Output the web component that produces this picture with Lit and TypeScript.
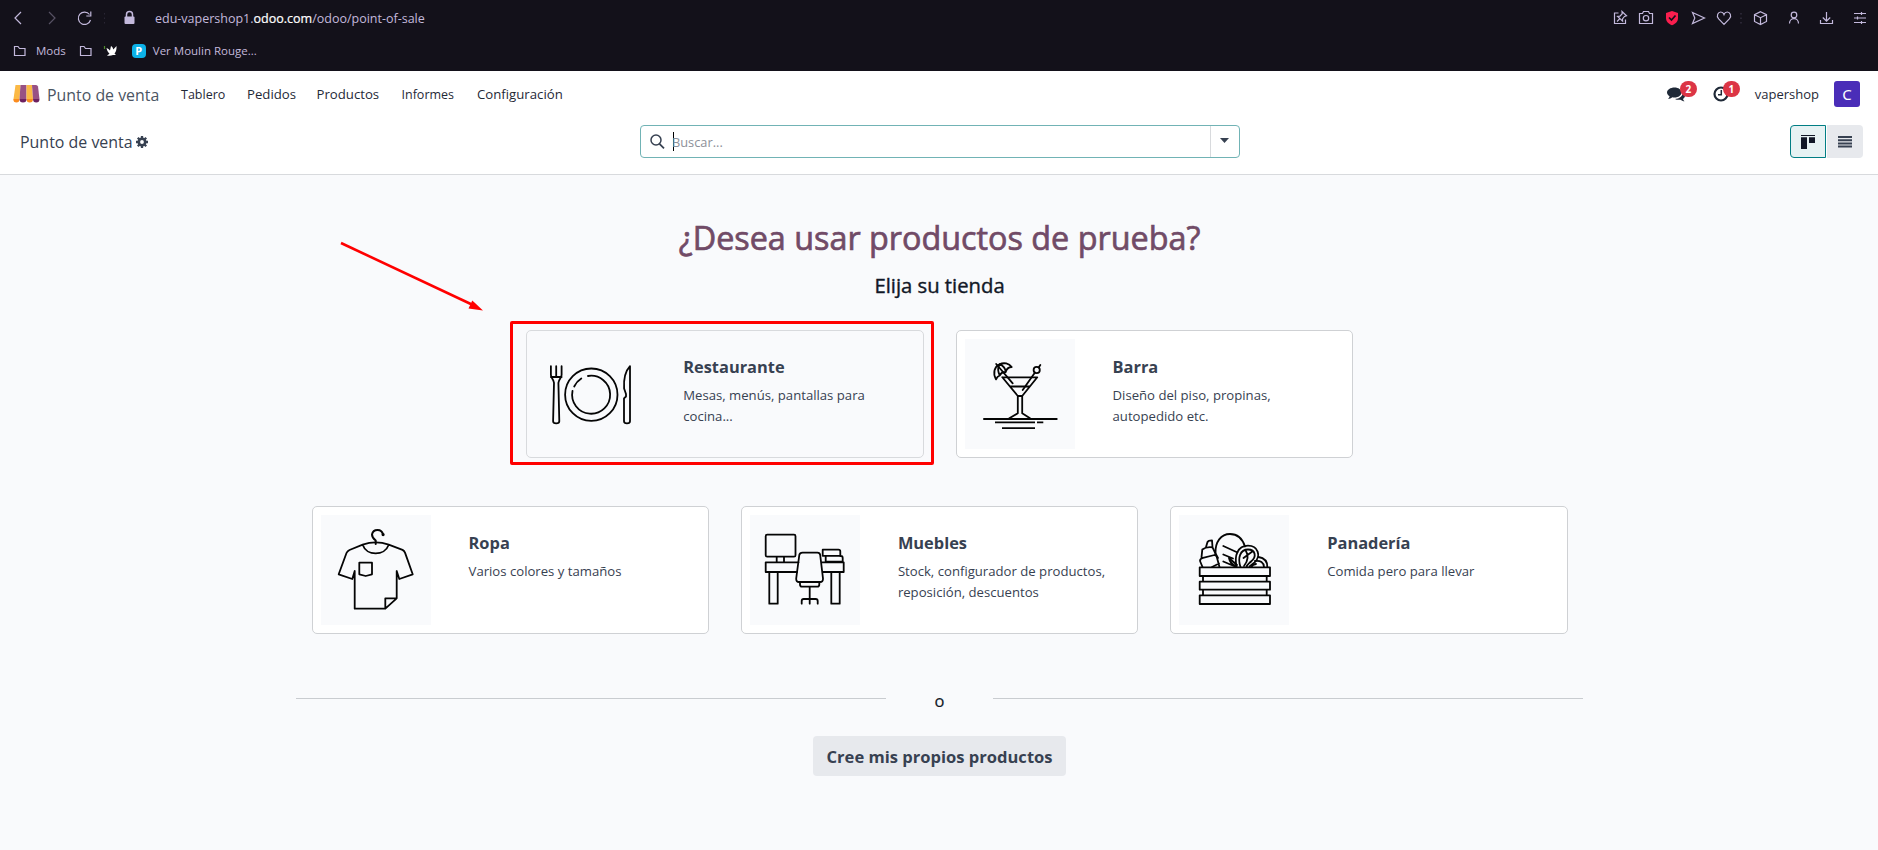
import { LitElement, html, css, svg } from "lit";
import { customElement } from "lit/decorators.js";

const plate = svg`
  <path d="M15.900 27.200v8.600c0 3.600 2.400 3.500 3.100 8l-.9 38.400c0 2.800 6.200 2.800 6.200 0l-.9-38.400c.7-4.500 3.200-4.400 3.200-8V27.200M21.200 27.200V38M15.900 38H26.600"/>
  <circle cx="56.300" cy="55.700" r="26.200"/>
  <path d="M53 37A19 19 0 1 1 37.500 52M39.200 47.500A19 19 0 0 1 46.300 39.500"/>
  <path d="M95 27.200V82.200c0 2.800-6 2.800-6 0V59.300l2-1.800V55l-1.900-5.500C88.600 41 90.500 32 95 27.200z"/>`;

const cocktail = svg`
  <path d="M37.300 38.300H72.300L57.200 57V74.300L65 79.200M37.300 38.300L52.800 57V74.300L44.300 79.200M45.700 47.500H64.300M52.800 57H57.200"/>
  <path d="M19 80H91.700" stroke-width="2"/>
  <path d="M30 83.400H70M72 83.400H78.300M37 89.100H70" stroke-width="1.900" stroke-linecap="butt"/>
  <circle cx="71.700" cy="31" r="3.100"/>
  <path d="M75.300 26L73.700 28.500M70 33.500L57.700 51M31.200 25L47.700 44.300"/>
  <path d="M31 40.400C27.500 34 29.500 27.500 34.500 25.300C39 23.200 44 24.300 46.700 28C43.500 28.200 41.500 30 40.700 33C38 33 35.500 34.500 34.800 36.500C33 37 31.800 38.300 31 40.400zM34.500 25.300C32.500 29 33 33 34.800 36.500M34.500 25.300C38 26.500 40.500 29.500 40.700 33"/>`;

const shirt = svg`
  <path d="M41.700 29.700Q54.700 25.200 67.700 29.700L81.500 34.900Q83.200 35.800 84 37.600L91.700 59.300L78.300 64L75.700 56V83.300L64.300 93.700H33.700V56L31.300 64L17.700 59.300L25.500 38Q26.300 36.200 28.500 35zM41.700 29.700C45.500 41.300 63.700 41.300 67.700 29.700M64.300 93.700V83.300H75.700M38.300 47.700H51V59.300L44.700 61L38.300 59.300z"/>
  <path d="M54.700 29V25.500Q51 22.700 51 19.500A5.600 5.600 0 0 1 62 19.600" stroke-width="2"/>
  <circle cx="62.100" cy="19.600" r=".7"/>`;

const desk = svg`
  <rect x="15.700" y="19.700" width="29.800" height="22" rx="1.500"/>
  <path d="M26.700 42V47.300M34 42V47.300M48.500 47.300H15.700V57H47M72 47.300H93.700V57H73M19.300 57V88.700H27.700V57M81.300 57V88.700H89.700V57"/>
  <path d="M52.500 37.700H67.500Q69.800 37.700 70.200 40L73 63.500Q73.200 67 70 67H49Q46 67 46.200 63.500L49.300 40Q49.800 37.700 52.500 37.700zM50 67V69.500Q50 71.700 52 71.700H67.300Q69.300 71.700 69.300 69.500V67M59.700 71.700V88.700M51.700 88.700V86Q51.700 84 53.700 84H65.700Q67.700 84 67.700 86V88.700"/>
  <path d="M72.700 34.700H88.500Q90.300 34.700 90.300 36.500V40.800H72.700zM90 41H91Q92.700 41 92.700 43V46.700H75.700V41"/>`;

const crate = svg`
  <path d="M20.700 52.300H91V61H20.700zM20.700 66.700H91V74.700H20.700zM20.700 80.300H91V89H20.700zM24 61V66.700M87.700 61V66.700M24 74.700V80.300M87.700 74.700V80.300"/>
  <path d="M26.800 32.700L28.500 27Q29.300 25.300 33 25.300L33.500 32.300M22.500 42.300L23.300 34.500Q27 31.500 33.500 32.300L36.500 38.500M21 46Q21 43.500 24 42.800L35.500 40Q37 40 37.800 42L40.500 52M21 46L23.500 52M33 52L40 48.500"/>
  <path d="M36.500 38.300C36 27 42 19 51 19C58 19 63.500 24 66 31.500M36.500 38.300L39 43M44.300 31L58.500 37.500M44.300 39.500L54 43.500M44.300 46.500L56 51.500M50 43L58 50M50 43Q51 49 57 51"/>
  <path d="M57.700 52C55 41 58.500 30.700 69 30.700C79 30.700 82.500 41 75.500 47.500L70.500 51.500M61.500 52C58.500 43 61 34.500 69 34.500C76.500 34.500 78 42 72 46.500C70 48.500 68 49.500 67.500 52M66.500 35C69.500 40 69 46 65 51M74 36L64.500 43"/>
  <path d="M79.500 42Q88.500 43.500 88.300 52M76 46Q84.500 45 85 52M72.500 52Q73.500 49.500 77 49"/>`;

@customElement("shop-card")
class ShopCard extends LitElement {
  static properties = { name: {}, text: {}, art: { attribute: false }, active: { type: Boolean, reflect: true } };
  declare name: string;
  declare text: string;
  declare art: unknown;
  declare active: boolean;
  static styles = css`
    :host { display: flex; box-sizing: border-box; width: 397.330px; height: 128px; padding: 8px; background: #fff;
      border: 1px solid #cfd1d4; border-radius: 5px; }
    :host([active]) { background: #f9fafc; border-color: #d8dadd; }
    .art { flex: none; width: 110px; height: 110px; background: #f9fafc; }
    svg { display: block; fill: none; stroke: #050505; stroke-width: 1.800; stroke-linejoin: round; stroke-linecap: round; }
    .body { padding: 16px 0 0 38px; width: 216px; }
    h3 { margin: 0; font-size: 16.400px; line-height: 23px; font-weight: 700; color: #374151; }
    p { margin: 7px 0 0; font-size: 13.150px; line-height: 21px; color: #374151; white-space: pre-line; }
  `;
  render() {
    return html`<div class="art"><svg width="110" height="110" viewBox="0 0 110 110">${this.art}</svg></div>
      <div class="body"><h3>${this.name}</h3><p>${this.text}</p></div>`;
  }
}

@customElement("app-root")
class AppRoot extends LitElement {
  static styles = css`
    :host { display: block; position: relative; width: 1878px; height: 850px; overflow: hidden; background: #f9fafc;
      font-family: "Open Sans", "Noto Sans", sans-serif; color: #374151; }
    svg { display: block; flex: none; }
    .row { display: flex; align-items: center; }
    .browser { height: 71px; background: #13111a; color: #c3b9dc; }
    .browser svg { fill: none; stroke: #c3b9dc; stroke-width: 1.200; }
    .browser .dim { stroke: #575264; }
    .browser .leaf { stroke: #4f8a2b; }
    .tools { height: 36px; padding-left: 13px; }
    .url { font-size: 12.500px; margin-left: 18px; padding-top: 1px; line-height: 18px; white-space: nowrap; }
    .url b { font-weight: 400; color: #fff; -webkit-text-stroke: .2px #fff; }
    .actions { margin-left: auto; padding-right: 11px; }
    .marks { height: 30px; padding-left: 13px; font-size: 11.500px; line-height: 16px; }
    .marks span { margin-top: -1px; }
    .marks .mods { margin: -1px 13px 0 10px; }
    .marks .p { width: 14px; height: 14px; border-radius: 4px; background: #0cb2e8; color: #fff; font-weight: 700; font-size: 11px; line-height: 14px; text-align: center; margin: 0 7px 0 14px; }
    .header { background: #fff; height: 46px; padding: 0 18px 0 13px; }
    .brand { font-size: 15.900px; margin: 1px 0 0 7px; width: 134px; color: #4b5563; }
    .menu { display: grid; grid-template-columns: 66px 69.500px 85px 75.500px auto; align-items: baseline; margin-top: -1px; font-size: 13.200px; color: #1f2937; }
    .menu .tight { font-size: 12.500px; }
    .tray { margin-left: auto; color: #1f2937; font-size: 13px; }
    .note { position: relative; }
    .messages { width: 46px; }
    .messages .badge { left: 13px; }
    .activities { width: 42px; }
    .activities .badge { left: 10px; }
    .badge { position: absolute; top: -5px; height: 16px; width: 17px; border-radius: 8px; background: #dc3545; color: #fff; font-size: 10px; line-height: 16px; font-weight: 700; text-align: center; }
    .avatar { width: 26px; height: 26px; margin-left: 15px; border-radius: 3px; background: #4a2db8; color: #fff; text-align: center; font: 15px/26px "Noto Sans", sans-serif; }
    .panel { background: #fff; height: 57px; padding: 0 15px 0 20px; display: grid; grid-template-columns: 620px 600px 1fr; align-items: start; border-bottom: 1px solid #d8dadd; }
    .crumb { font-size: 15.950px; height: 33px; margin-top: 8px; gap: 3px; color: #374151; }
    .search { box-sizing: border-box; height: 33px; margin-top: 8px; border: 1px solid #71b3b5; border-radius: 4px; }
    .search .glass { margin-left: 9px; }
    .caret { width: 1px; height: 19px; background: #000; margin-left: 8px; }
    .hint { font-size: 12.800px; color: #8d9099; flex: 1; margin-left: -2px; }
    .drop { border-left: 1px solid #d8dadd; width: 28px; height: 31px; display: grid; place-items: center; }
    .drop svg { margin: 0 2px 2px 0; }
    .views { justify-self: end; margin-top: 8px; display: flex; gap: 1px; }
    .view { box-sizing: border-box; width: 36px; height: 33px; display: grid; place-items: center; background: #e7e9ed; border-radius: 0 4px 4px 0; }
    .view.on { background: #e6f2f3; border: 1px solid #017e84; border-radius: 4px 0 0 4px; }
    .content { padding-left: 1.100px; }
    h1 { margin: 0; padding-top: 39px; text-align: center; font-size: 32.350px; line-height: 46px; font-weight: 500; color: #714b67; -webkit-text-stroke: .7px #714b67; }
    h2 { margin: 10px 0 0; text-align: center; font-size: 20.250px; line-height: 30px; font-weight: 500; color: #111827; -webkit-text-stroke: .4px #111827; }
    .shops { display: flex; justify-content: center; gap: 32px; margin-top: 30px; }
    .shops + .shops { margin-top: 48px; }
    .or { display: flex; justify-content: space-between; width: 1287.500px; margin: 55px auto 0; font-size: 16.500px; line-height: 24px; height: 28px; font-weight: 500; color: #111827; }
    .or span { -webkit-text-stroke: .2px #111827; }
    .or i { width: 590px; height: 1px; margin-top: 9px; background: #c9ccd0; }
    .own { display: block; width: 253px; height: 40px; margin: 19px auto 0; padding: 1px 0 0; border: 0; border-radius: 4px; background: #e7e9ed; color: #374151; font: 700 16.560px/39px "Open Sans", sans-serif; }
    .frame { position: absolute; left: 510px; top: 321px; box-sizing: border-box; width: 424px; height: 144px; border: 3px solid #f00; border-radius: 2px; }
    .arrow { position: absolute; left: 336px; top: 238px; }
  `;
  render() {
    const folder = html`<svg width="13" height="12"><path d="M1.500 1.500h3.500l1.500 2h5.500v7h-10.500z"/></svg>`;
    return html`
      <div class="browser">
        <div class="row tools">
          <svg width="92" height="36">
            <path d="M8 12L2 18l6 6"/><path class="dim" d="M36 12l6 6-6 6"/>
            <path d="M76.500 14.500A6.200 6.200 0 1 0 77.500 20M77.800 11.500v4.500h-4.500"/>
            <path d="M92 13v11" stroke="#3a3647" stroke-dasharray="1.500 3"/>
          </svg>
          <svg width="32" height="36"><path d="M21.500 17v-2.500a3 3 0 0 1 6 0v2.500" stroke-width="1.500"/><rect x="19.500" y="16.500" width="10" height="7.500" rx="1" fill="#c3b9dc" stroke="none"/></svg>
          <div class="url">edu-vapershop1.<b>odoo.com</b>/odoo/point-of-sale</div>
          <svg class="actions" width="255" height="36">
            <path d="M6.500 13H2.500v10.500h11v-4"/><path d="M10 11.500l4.500 4.300-2 .6-2 2.500.1 2.200-5-4.600 2.400-.3 2.200-2.500zM7.500 19l-2.500 2.500"/>
            <path d="M27.500 13.500h3l1-2h5l1 2h3v10h-13z"/><circle cx="34" cy="18.200" r="2.700"/>
            <path d="M60 11l6 2v5c0 3.500-2.500 6-6 7.300-3.500-1.300-6-3.800-6-7.300v-5z" fill="#fa1e4e" stroke="none"/><path d="M57 17.500l2.500 2.500 4-4.500" stroke="#13111a" stroke-width="1.700"/>
            <path d="M80.500 12.500L92.500 18l-12 5.500 2.300-5.500z"/>
            <path d="M112 24.300l-5.300-5.500c-3-3.300-.4-6.800 2-6.800 1.700 0 2.800 1.200 3.300 2.500.5-1.300 1.600-2.500 3.300-2.500 2.400 0 5 3.500 2 6.800z"/>
            <path d="M129 13v11" stroke="#3a3647" stroke-dasharray="1.500 3"/>
            <path d="M148.500 11.700l6 3v6.800l-6 3-6-3v-6.800zM142.500 14.700l6 3 6-3M148.500 17.700v6.800"/>
            <circle cx="182" cy="15" r="2.800"/><path d="M177.500 23.500c0-6.500 9-6.500 9 0"/>
            <path d="M208.500 20v3.500h12V20M214.500 12v9M210.800 17.500l3.700 3.700 3.700-3.700"/>
            <path d="M242 13.500h12M242 18h12M242 22.500h12M249.500 12v3M245.500 16.500v3M249.500 21v3"/>
          </svg>
        </div>
        <div class="row marks">
          ${folder}<span class="mods">Mods</span>${folder}
          <svg width="26" height="14"><path d="M14.500 4c1.500.5 2.500 1.500 3.500 2.500l1-4.500c1.500 1 2 2 2.300 3.500L24.500 2c.2 3-.3 5.500-2 7.500l1.500 1.500h-3c-2 .8-4 .8-6 .5l2.500-1.800C15.500 8 15 6 14.500 4z" fill="#fff" stroke="none"/><path class="leaf" d="M12.500 2v3"/></svg>
          <span class="p">P</span><span>Ver Moulin Rouge...</span>
        </div>
      </div>
      <div class="row header">
        <svg width="27" height="20" viewBox="0 0 27 20">
          <path d="M2.500 1h5L6.500 15H.5z" fill="#fbb945"/><path d="M7.500 1h6v14h-7z" fill="#985184"/><path d="M13.500 1h5.500l1 14h-6.500z" fill="#fbb945"/><path d="M19 1h4q1.500 0 2 1.500L26.500 15H20z" fill="#985184"/>
          <path d="M.3 15h6.200a3.100 3.500 0 0 1-6.200 0zM13.500 15H20a3.200 3.500 0 0 1-6.500 0z" fill="#fb8c1e"/><path d="M6.500 15h7a3.500 3.500 0 0 1-7 0zM20 15h6.500a3.200 3.500 0 0 1-6.500 0z" fill="#6d2160"/>
        </svg>
        <div class="brand">Punto de venta</div>
        <div class="menu"><span class="tight">Tablero</span><span>Pedidos</span><span>Productos</span><span class="tight">Informes</span><span>Configuración</span></div>
        <div class="row tray">
          <div class="note messages"><svg width="19" height="16" fill="#1f2937"><path d="M7.500 1.500c4 0 7 2.200 7 5s-3 5-7 5c-.8 0-1.500-.1-2.200-.3C4 12.200 2.500 12.800 1 12.900c.8-.8 1.400-1.600 1.600-2.700C1 9.300 0 8 0 6.500c0-2.800 3.500-5 7.500-5z"/><path d="M15.800 6.500c1.400.8 2.200 2 2.200 3.200 0 1.300-.8 2.500-2 3.200.2 1 .7 1.600 1.500 2.400-1.500-.1-3-.7-4-1.600-2 .4-4 .1-5.500-.8 4.500-.1 7.800-2.700 7.800-6.400z"/></svg><span class="badge">2</span></div>
          <div class="note activities"><svg width="17" height="16" fill="none" stroke="#1f2937"><circle cx="8" cy="8" r="6.500" stroke-width="2.200"/><path d="M8.300 4v4.700H5" stroke-width="1.500"/></svg><span class="badge">1</span></div>
          <span>vapershop</span><div class="avatar">C</div>
        </div>
      </div>
      <div class="panel">
        <div class="row crumb">Punto de venta
          <svg width="12" height="12" viewBox="0 0 12 12"><circle cx="6" cy="6" r="3.200" fill="none" stroke="#374151" stroke-width="2.600"/><path d="M6 0v2.500M6 9.500V12M0 6h2.500M9.500 6H12M1.800 1.800l1.700 1.700M8.500 8.500l1.700 1.700M1.800 10.200l1.700-1.700M8.500 3.500l1.700-1.700" stroke="#374151" stroke-width="2.300"/></svg>
        </div>
        <div class="row search">
          <svg class="glass" width="15" height="15" fill="none" stroke="#374151"><circle cx="6" cy="6" r="5" stroke-width="1.500"/><path d="M9.500 9.800L14 14.300" stroke-width="1.800"/></svg>
          <span class="caret"></span><span class="hint">Buscar...</span>
          <span class="drop"><svg width="9" height="5"><path d="M0 0h9L4.500 5z" fill="#374151"/></svg></span>
        </div>
        <div class="views">
          <span class="view on"><svg width="14" height="14" fill="#111827"><path d="M0 0h14v1H0zM0 2.200h6V14H0zM8 2.200h6V8H8z"/></svg></span>
          <span class="view"><svg width="14" height="12" fill="#374151"><path d="M0 0h14v2H0zM0 3.200h14v2H0zM0 6.400h14v2H0zM0 9.600h14v2H0z"/></svg></span>
        </div>
      </div>
      <div class="content">
        <h1>¿Desea usar productos de prueba?</h1>
        <h2>Elija su tienda</h2>
        <div class="shops">
          <shop-card active name="Restaurante" .text=${"Mesas, menús, pantallas para\ncocina..."} .art=${plate}></shop-card>
          <shop-card name="Barra" .text=${"Diseño del piso, propinas,\nautopedido etc."} .art=${cocktail}></shop-card>
        </div>
        <div class="shops">
          <shop-card name="Ropa" .text=${"Varios colores y tamaños"} .art=${shirt}></shop-card>
          <shop-card name="Muebles" .text=${"Stock, configurador de productos,\nreposición, descuentos"} .art=${desk}></shop-card>
          <shop-card name="Panadería" .text=${"Comida pero para llevar"} .art=${crate}></shop-card>
        </div>
        <div class="or"><i></i><span>o</span><i></i></div>
        <button class="own">Cree mis propios productos</button>
      </div>
      <div class="frame"></div>
      <svg class="arrow" width="155" height="80"><path d="M5 5L138 67.500" stroke="#f00" stroke-width="2.600"/><path d="M147 72.500L132.500 70.500L136.300 62.500z" fill="#f00"/></svg>
    `;
  }
}
